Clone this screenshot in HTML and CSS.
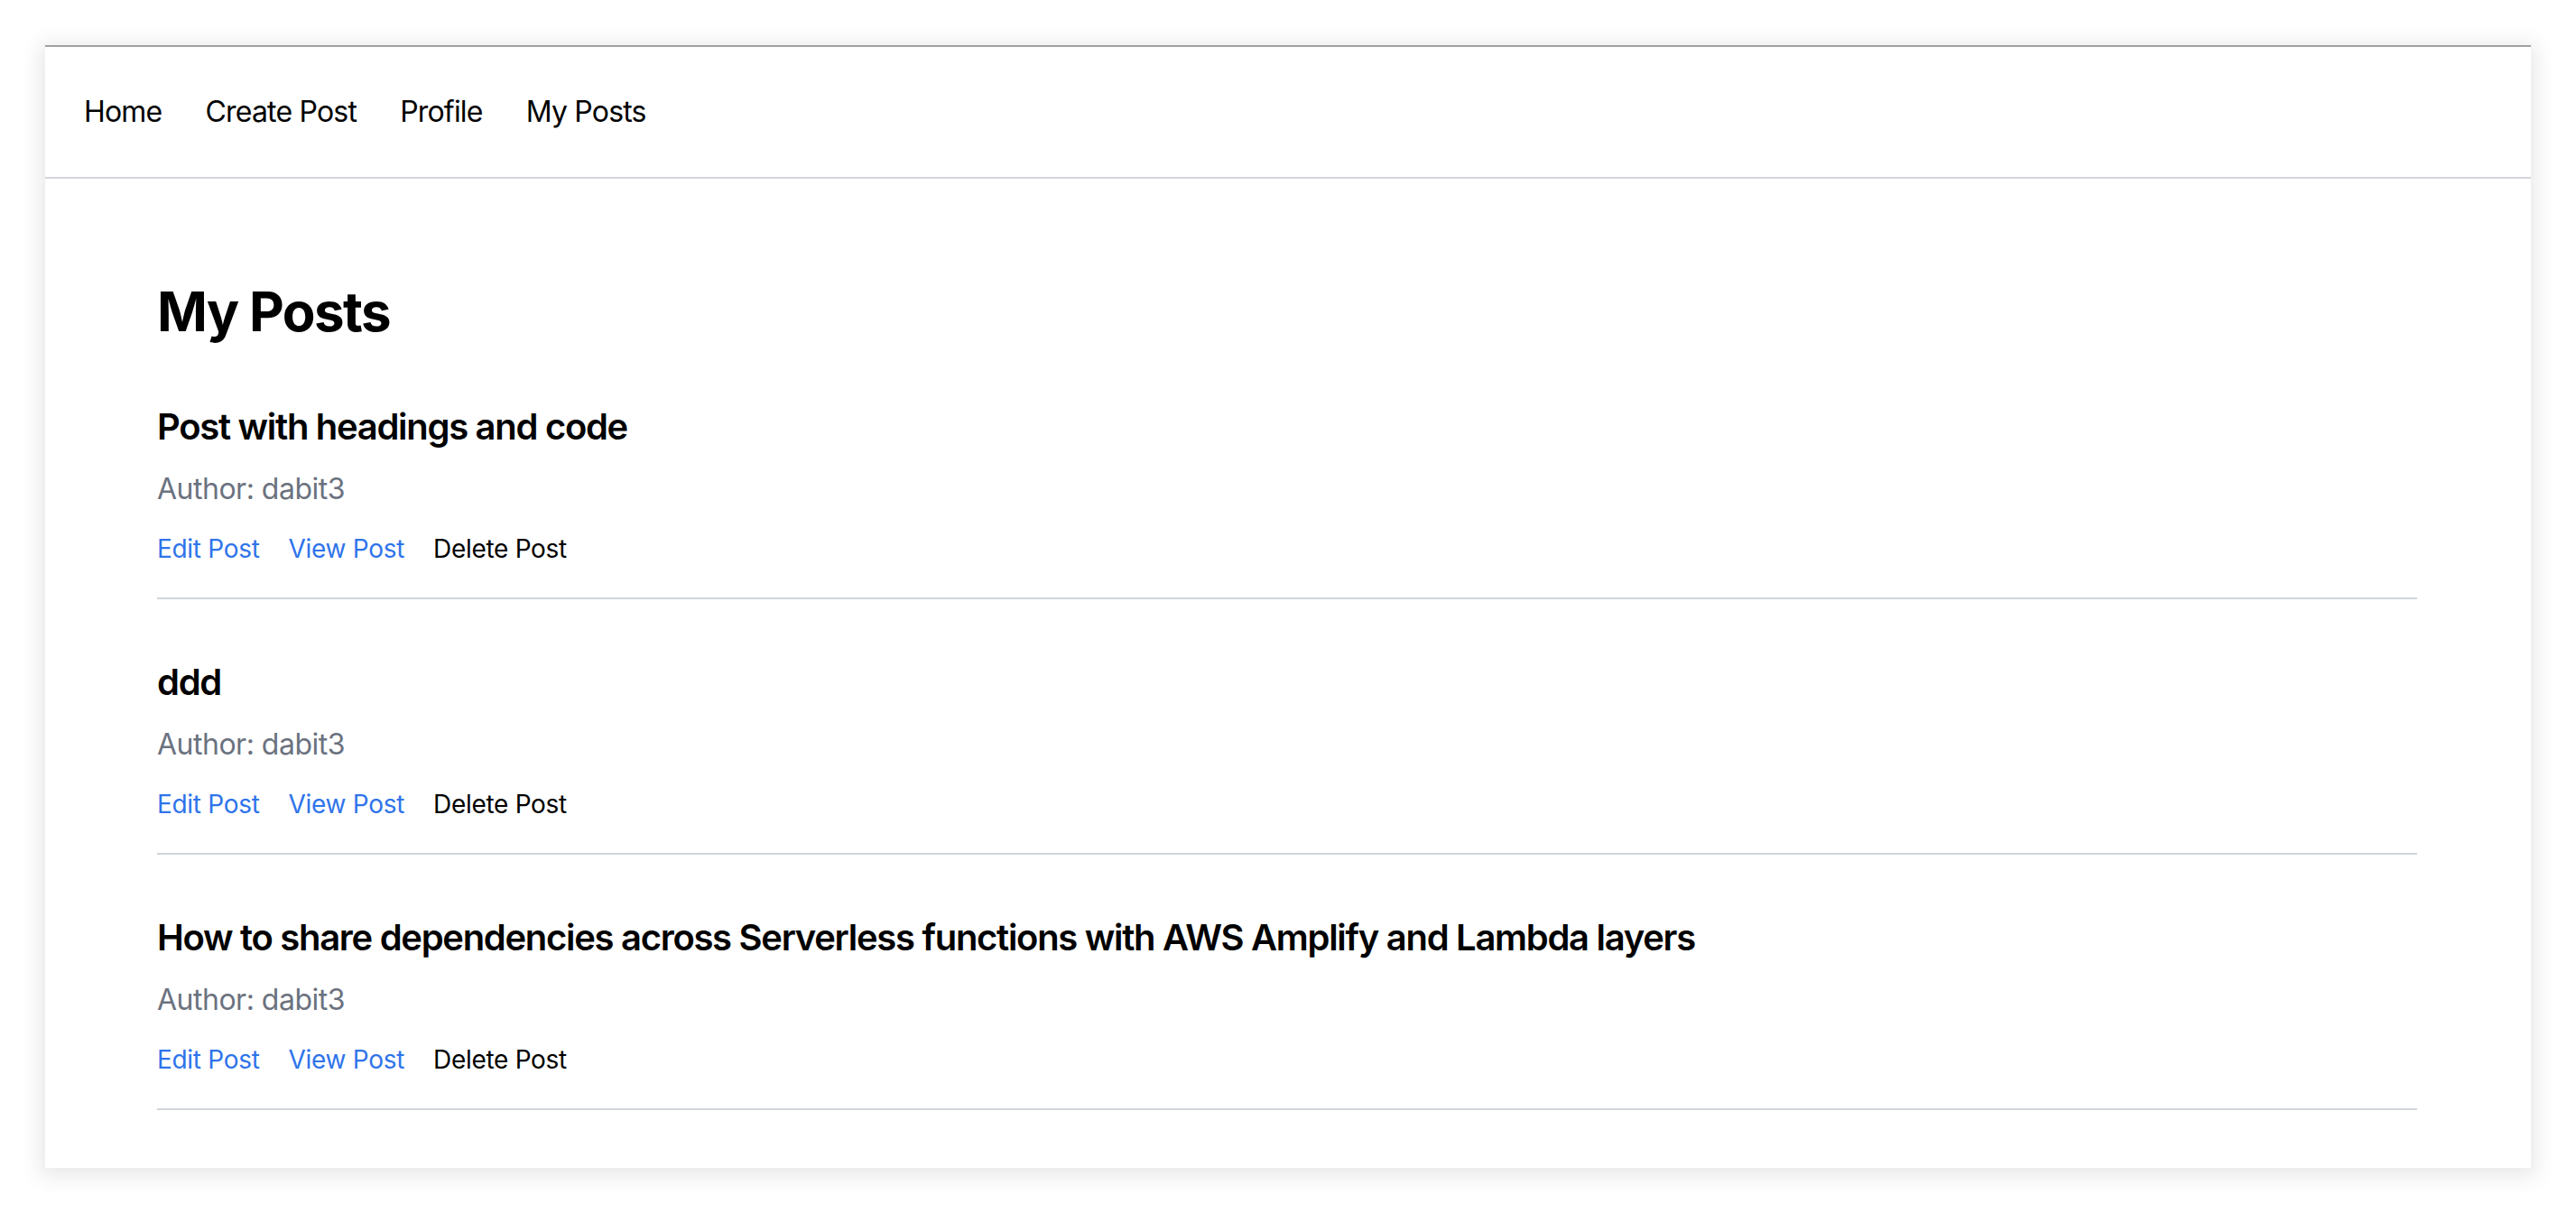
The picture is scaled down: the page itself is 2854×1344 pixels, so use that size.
FILE: index.html
```html
<!DOCTYPE html>
<html lang="en">
<head>
<meta charset="utf-8">
<title>My Posts</title>
<link rel="stylesheet" href="styles.css">
</head>
<body>
<div class="window">
  <nav class="navbar">
    <a class="nav-link" href="#">Home</a>
    <a class="nav-link" href="#">Create Post</a>
    <a class="nav-link" href="#">Profile</a>
    <a class="nav-link" href="#">My Posts</a>
  </nav>
  <main class="content">
    <h1 class="page-title">My Posts</h1>
    <div class="post">
      <h2 class="post-title">Post with headings and code</h2>
      <p class="post-author">Author: dabit3</p>
      <div class="post-actions">
        <a class="action link" href="#">Edit Post</a>
        <a class="action link" href="#">View Post</a>
        <button class="action delete">Delete Post</button>
      </div>
    </div>
    <div class="post">
      <h2 class="post-title">ddd</h2>
      <p class="post-author">Author: dabit3</p>
      <div class="post-actions">
        <a class="action link" href="#">Edit Post</a>
        <a class="action link" href="#">View Post</a>
        <button class="action delete">Delete Post</button>
      </div>
    </div>
    <div class="post">
      <h2 class="post-title">How to share dependencies across Serverless functions with AWS Amplify and Lambda layers</h2>
      <p class="post-author">Author: dabit3</p>
      <div class="post-actions">
        <a class="action link" href="#">Edit Post</a>
        <a class="action link" href="#">View Post</a>
        <button class="action delete">Delete Post</button>
      </div>
    </div>
  </main>
</div>
</body>
</html>
```

FILE: styles.css
```css
* { box-sizing: border-box; }

html, body {
  margin: 0;
  background: #ffffff;
}

body {
  padding: 50px;
  font-family: Inter, "Noto Sans", "Liberation Sans", sans-serif;
  color: #000;
}

.window {
  min-height: calc(100vh - 100px);
  background: #ffffff;
  border-top: 2px solid #a0a0a0;
  box-shadow: 0 4px 22px 6px rgba(0, 0, 0, 0.09);
}

.navbar {
  display: flex;
  gap: 48px;
  padding: 48px 43px;
  border-bottom: 2px solid #d4d6db;
}

.nav-link {
  font-size: 32px;
  line-height: 48px;
  letter-spacing: -0.8px;
  color: #000;
  text-decoration: none;
}

.content {
  padding: 111px 126px 64px 124px;
}

.page-title {
  margin: 0;
  font-size: 60px;
  line-height: 72px;
  font-weight: 700;
  letter-spacing: -1.6px;
}

.post {
  padding-top: 64px;
  padding-bottom: 34px;
  border-bottom: 2px solid #d1d5db;
}

.post-title {
  margin: 0;
  font-size: 40px;
  line-height: 56px;
  font-weight: 600;
  letter-spacing: -1.3px;
}

.post-author {
  margin: 17px 0 0;
  font-size: 32px;
  line-height: 48px;
  letter-spacing: -0.5px;
  color: #6b7280;
}

.post-actions {
  display: flex;
  gap: 32px;
  margin-top: 22px;
}

.action {
  font-family: inherit;
  font-size: 28px;
  line-height: 40px;
  letter-spacing: -0.3px;
  text-decoration: none;
}

.link {
  color: #2f74ea;
}

.delete {
  padding: 0;
  border: 0;
  background: none;
  color: #000;
  cursor: pointer;
}
```
